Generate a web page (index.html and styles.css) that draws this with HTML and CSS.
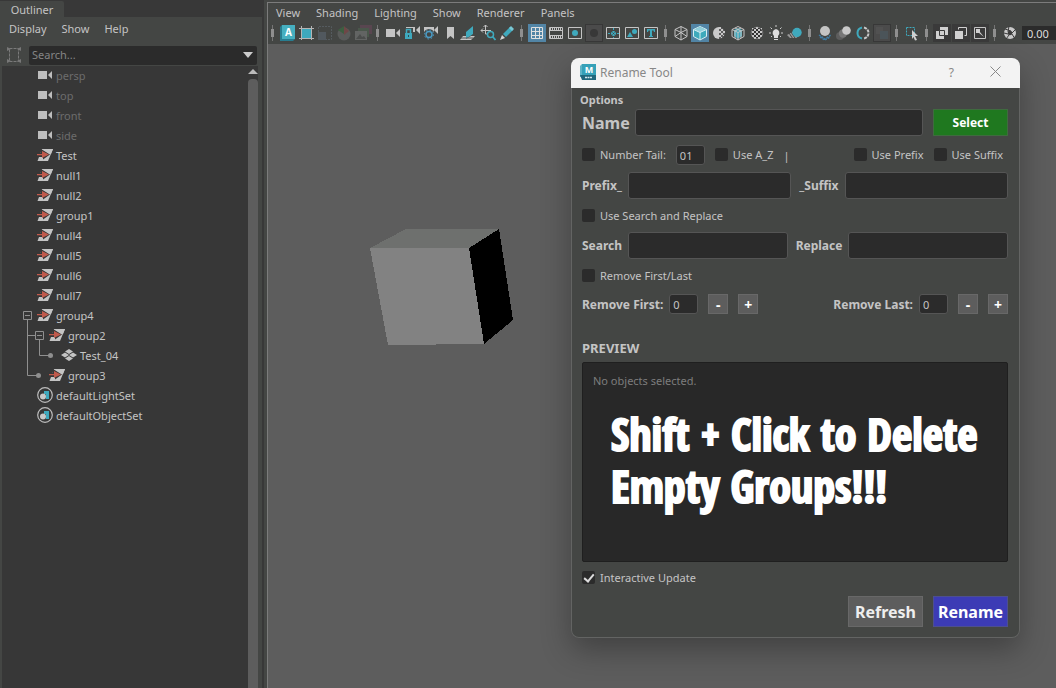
FILE: index.html
```html
<!DOCTYPE html>
<html lang="en">
<head>
    <meta charset="UTF-8">
    <meta name="viewport" content="width=device-width, initial-scale=1.0">
    <title>Rename Tool</title>
    <link rel="stylesheet" href="styles.css">
</head>
<body>

<!-- icons shared by several rows -->
<svg class="defs" aria-hidden="true">
    <symbol id="camera" viewBox="0 0 16 16">
        <path fill="#bdbdbd" d="M1 4h9v8H1zM11 8l4-4v8z"/>
    </symbol>
    <symbol id="group" viewBox="0 0 16 16">
        <path fill="#c4c4c4" d="M5 2h11l-5 12H.5z"/>
        <path fill="#373737" d="M0 5.500h4V2l9 5.500-7 5V10H0z"/>
        <path fill="#c05a4c" d="M0 7h5V4l7 3.500-7 3.500V8.200H0z"/>
        <path fill="#c4c4c4" d="M5.500 2H16l-2 5h-1.500L7 3z"/>
    </symbol>
    <symbol id="mesh" viewBox="0 0 16 16">
        <path fill="#c4c4c4" d="M8 2l4 2.500L8 7 4 4.500zM4 5.500L8 8l-4 2.500L0 8zM12 5.500L16 8l-4 2.500L8 8zM8 9l4 2.500L8 14l-4-2.500z"/>
    </symbol>
    <symbol id="set" viewBox="0 0 16 16">
        <circle cx="8" cy="8" r="7.300" fill="none" stroke="#bdbdbd" stroke-width="1.200"/>
        <path fill="#3fa9bd" d="M7 4h5v8H9V7H7z"/>
        <circle cx="6" cy="9.500" r="3" fill="#c8c8c8"/>
    </symbol>
</svg>

<div class="app">
    <aside class="outliner">
        <div class="tabs"><button type="button" class="tab">Outliner</button></div>
        <nav class="menu outliner-menu">
            <button type="button">Display</button>
            <button type="button">Show</button>
            <button type="button">Help</button>
        </nav>
        <div class="search">
            <svg class="frame-icon" viewBox="0 0 16 18" width="16" height="18" aria-hidden="true">
                <path fill="none" stroke="#7a7a7a" stroke-dasharray="3 1" d="M3.500 2.500h9v13h-9z"/>
                <path fill="#777" d="M1 1l4 2-4 2zM15 1l-4 2 4 2zM1 13l4 2-4 2zM15 13l-4 2 4 2z"/>
            </svg>
            <div class="search-box">
                <input type="text" placeholder="Search..." aria-label="Search">
                <svg viewBox="0 0 10 6" width="10" height="6" aria-hidden="true"><path fill="#ccc" d="M0 0h10L5 6z"/></svg>
            </div>
        </div>
        <div class="tree-wrap">
            <ul class="tree">
                <li class="hidden-node"><svg class="icon"><use href="#camera"/></svg>persp</li>
                <li class="hidden-node"><svg class="icon"><use href="#camera"/></svg>top</li>
                <li class="hidden-node"><svg class="icon"><use href="#camera"/></svg>front</li>
                <li class="hidden-node"><svg class="icon"><use href="#camera"/></svg>side</li>
                <li><svg class="icon"><use href="#group"/></svg>Test</li>
                <li><svg class="icon"><use href="#group"/></svg>null1</li>
                <li><svg class="icon"><use href="#group"/></svg>null2</li>
                <li><svg class="icon"><use href="#group"/></svg>group1</li>
                <li><svg class="icon"><use href="#group"/></svg>null4</li>
                <li><svg class="icon"><use href="#group"/></svg>null5</li>
                <li><svg class="icon"><use href="#group"/></svg>null6</li>
                <li><svg class="icon"><use href="#group"/></svg>null7</li>
                <li class="parent">
                    <button type="button" class="toggle" aria-label="Collapse group4"><svg width="14" height="20"><path d="M.5 5.500h8v8h-8zM2 9.500h5M4.500 14v6"/></svg></button>
                    <svg class="icon"><use href="#group"/></svg>group4
                </li>
                <li class="child">
                    <svg class="lines" width="33" height="20"><path d="M25.500 0v20M25.500 9.500h8"/></svg>
                    <button type="button" class="toggle" aria-label="Collapse group2"><svg width="14" height="20"><path d="M.5 5.500h8v8h-8zM2 9.500h5M4.500 14v6"/></svg></button>
                    <svg class="icon"><use href="#group"/></svg>group2
                </li>
                <li class="child">
                    <svg class="lines" width="59" height="20"><path d="M25.500 0v20M37.500 0v9.500h10"/><circle cx="48.500" cy="9.500" r="2.500"/></svg>
                    <svg class="icon"><use href="#mesh"/></svg>Test_04
                </li>
                <li class="child">
                    <svg class="lines" width="47" height="20"><path d="M25.500 0v9.500h10"/><circle cx="36.500" cy="9.500" r="2.500"/></svg>
                    <svg class="icon"><use href="#group"/></svg>group3
                </li>
                <li><svg class="icon"><use href="#set"/></svg>defaultLightSet</li>
                <li><svg class="icon"><use href="#set"/></svg>defaultObjectSet</li>
            </ul>
            <div class="scrollbar">
                <svg viewBox="0 0 10 5" width="10" height="5" aria-hidden="true"><path fill="#bbb" d="M0 5l5-5 5 5z"/></svg>
                <div class="thumb"></div>
            </div>
        </div>
    </aside>

    <main class="panel">
        <nav class="menu panel-menu">
            <button type="button">View</button>
            <button type="button">Shading</button>
            <button type="button">Lighting</button>
            <button type="button">Show</button>
            <button type="button">Renderer</button>
            <button type="button">Panels</button>
        </nav>
        <div class="toolbar">
            <span class="handle"></span>
            <button type="button" aria-label="Arnold"><svg viewBox="0 0 18 18"><path fill="#287d90" d="M2 3l2-2h13v14l-2 2H2z"/><path fill="#46afc0" d="M4 1h13v14H4z"/><text x="10.500" y="12" class="logo-text">A</text></svg></button>
            <button type="button" aria-label="Frame region"><svg viewBox="0 0 18 18"><path fill="none" stroke="#b5b5b5" d="M4.500 2v14M14.500 2v14M2 4.500h15M2 14.500h15"/><path fill="#3fa9bd" d="M5 5h9v9H5z"/></svg></button>
            <button type="button" aria-label="Snapshot" disabled><svg viewBox="0 0 18 18"><path fill="#51585e" d="M2 8h8v8H2z"/><path fill="none" stroke="#555b5f" stroke-dasharray="2 1" d="M2.500 8V2.500h13v13H10"/></svg></button>
            <button type="button" aria-label="Color" disabled><svg viewBox="0 0 18 18"><circle cx="9" cy="10" r="6.500" fill="#595b5a"/><path fill="#3d5e41" d="M3 6l6-4v8z"/><path fill="#6e4747" d="M9 2l5 5-5 4z"/></svg></button>
            <button type="button" aria-label="Image layers" disabled><svg viewBox="0 0 18 18"><path fill="#594650" d="M6 1h12v9H6z"/><path fill="#4a574b" d="M4 4h11v9H4z"/><path fill="#626463" d="M1 7h12v9H1z"/><path fill="#4b4d4c" d="M2 15l4-5 2 3 2-1 2 3z"/></svg></button>
            <span class="handle"></span>
            <button type="button" aria-label="Select camera"><svg viewBox="0 0 18 18"><path fill="#c4c4c4" d="M2 5h9v8H2zM12 9l4-4v8z"/></svg></button>
            <button type="button" aria-label="Lock camera"><svg viewBox="0 0 18 18"><path fill="#c4c4c4" d="M3 3h9v5H3zM13 6l4-4v8z"/><path fill="#444644" d="M1 4h9v12H1z"/><path fill="#3fa9bd" d="M2 9h7v6H2z"/><path fill="none" stroke="#3fa9bd" stroke-width="1.500" d="M3.500 9V5.500h4V9"/><path fill="#2b4a50" d="M5 11h1v2H5z"/></svg></button>
            <button type="button" aria-label="Camera attributes"><svg viewBox="0 0 18 18"><path fill="#c4c4c4" d="M2 3h10v5H2zM12 6l4-4v8z"/><circle cx="7" cy="10.500" r="5.500" fill="#444644"/><circle cx="7" cy="10.500" r="3" fill="none" stroke="#4b9bc4" stroke-width="1.500"/><circle cx="7" cy="10.500" r="4.500" fill="none" stroke="#4b9bc4" stroke-dasharray="1.500 2"/></svg></button>
            <button type="button" aria-label="Bookmarks"><svg viewBox="0 0 18 18"><path fill="#c4c4c4" d="M6 3h7v12l-3.500-3L6 15z"/></svg></button>
            <button type="button" aria-label="Image plane"><svg viewBox="0 0 18 18"><path fill="#3fa9bd" d="M6 8l7-6v8l-7 5z"/><path fill="#c4c4c4" d="M3 12h3v3l5-3h4l-4 4H0z"/><path stroke="#555" d="M1 14h12" /></svg></button>
            <button type="button" aria-label="Pan and zoom"><svg viewBox="0 0 18 18"><path fill="none" stroke="#c4c4c4" d="M6.500 1v9M2 6.500h10M4.500 3l2-2 2 2M4 4.500l-2 2 2 2M6.500 10h2"/><circle cx="11.500" cy="10.500" r="3" fill="#444644" stroke="#3fa9bd" stroke-width="1.500"/><path stroke="#3fa9bd" stroke-width="1.800" d="M13.500 12.500l3 3.500"/></svg></button>
            <button type="button" aria-label="Grease pencil"><svg viewBox="0 0 18 18"><path fill="#3fa9bd" d="M5 10l7-7 3 3-7 7z"/><path fill="#79c8d5" d="M11 4l2-2 3 3-2 2z"/><path fill="#d5d5d5" d="M4 11l3 3-5 2z"/></svg></button>
            <span class="handle"></span>
            <button type="button" class="on" aria-label="Grid"><svg viewBox="0 0 18 18"><path fill="none" stroke="#e0e0e0" d="M3.500 3.500h11v11h-11zM7.500 4v10M11.500 4v10M4 7.500h10M4 11.500h10"/></svg></button>
            <button type="button" aria-label="Film gate"><svg viewBox="0 0 18 18"><path fill="none" stroke="#c4c4c4" d="M2.500 3.500h13v11h-13zM3 6.500h12M3 11.500h12"/><path fill="none" stroke="#c4c4c4" stroke-dasharray="1 1" d="M3 5h12M3 13h12" stroke-width="2"/></svg></button>
            <button type="button" aria-label="Resolution gate"><svg viewBox="0 0 18 18"><path fill="none" stroke="#c4c4c4" d="M2.500 3.500h13v11h-13z"/><circle cx="9" cy="9" r="3" fill="#3fa9bd"/></svg></button>
            <button type="button" class="dim" aria-label="Gate mask"><svg viewBox="0 0 18 18"><circle cx="9" cy="9" r="4" fill="#383838"/></svg></button>
            <button type="button" aria-label="Field chart"><svg viewBox="0 0 18 18"><path fill="none" stroke="#c4c4c4" d="M2.500 3.500h13v11h-13z"/><path stroke="#3fa9bd" stroke-dasharray="2 1" d="M4 9.500h11M9.500 4v10"/><circle cx="9.500" cy="9.500" r="2" fill="none" stroke="#3fa9bd"/></svg></button>
            <button type="button" aria-label="Safe action"><svg viewBox="0 0 18 18"><path fill="none" stroke="#c4c4c4" d="M2.500 3.500h13v11h-13z"/><path fill="#3fa9bd" d="M4 13l3-5 3 5z"/><circle cx="11.500" cy="7.500" r="2.500" fill="#3fa9bd"/></svg></button>
            <button type="button" aria-label="Safe title"><svg viewBox="0 0 18 18"><path fill="none" stroke="#c4c4c4" d="M2.500 3.500h13v11h-13z"/><path fill="#3fa9bd" d="M5 5h8v3h-1l-.5-1.500H10V12h1v1H7v-1h1V6.500H6.500L6 8H5z"/></svg></button>
            <span class="handle"></span>
            <button type="button" aria-label="Wireframe"><svg viewBox="0 0 18 18"><path fill="none" stroke="#c4c4c4" d="M9 2.500l6 3v7l-6 3.500-6-3.500v-7zM3 5.500l6 3 6-3M9 8.500V16M9 2.500v6L3 12.500M9 8.500l6 4"/></svg></button>
            <button type="button" class="on" aria-label="Smooth shade"><svg viewBox="0 0 18 18"><path fill="#3eaabc" stroke="#d8eef2" d="M9 2.500l6.500 3v7L9 16l-6.500-3.500v-7z"/><path fill="#91cfdc" d="M9 3l6 2.500L9 8.500 3 5.500z"/><path fill="none" stroke="#d8eef2" d="M2.500 5.500l6.500 3 6.500-3M9 8.500V16"/></svg></button>
            <button type="button" aria-label="Default material"><svg viewBox="0 0 18 18"><path fill="#c9c9c9" d="M9 3v12A6 6 0 0 1 9 3z"/><path fill="#5c5c5c" d="M9 3v12a6 6 0 0 0 0-12z"/><path fill="#c9c9c9" d="M9 3h2v2H9zM11 5h2v2h-2zM9 7h2v2H9zM13 7h2v2h-2zM11 9h2v2h-2zM9 11h2v2H9zM13 11h1v1h-1zM11 13h1v1h-1z"/></svg></button>
            <button type="button" aria-label="Wireframe on shaded"><svg viewBox="0 0 18 18"><path fill="#3fa9bd" d="M9 4l4 2v6l-4 3-4-3V6z"/><path fill="none" stroke="#c4c4c4" d="M9 2.500l6 3v7L9 16l-6-3.500v-7zM3 5.500l6 3 6-3M9 8.500V16M6 4l6 3v7M12 4L6 7v7"/></svg></button>
            <button type="button" aria-label="Textured"><svg viewBox="0 0 18 18"><circle cx="9" cy="9" r="6" fill="#303030"/><path fill="#c9c9c9" d="M8 3h2v2H8zM6 5h2v2H6zM10 5h2v2h-2zM4 7h2v2H4zM8 7h2v2H8zM12 7h2v2h-2zM6 9h2v2H6zM10 9h2v2h-2zM4 11h2v2H4zM8 11h2v2H8zM12 11h2v2h-2zM6 13h2v2H6zM10 13h2v2h-2zM4 4h1v1H4zM13 4h1v1h-1z"/><circle cx="9" cy="9" r="5.800" fill="none" stroke="#aaa" stroke-width=".6"/></svg></button>
            <button type="button" aria-label="Use all lights"><svg viewBox="0 0 18 18"><path fill="#ddd" d="M9 5a4 4 0 0 0-2 7v2h4v-2a4 4 0 0 0-2-7z"/><path fill="#ddd" d="M7 15h4v1H7z"/><path stroke="#ccc" d="M9 1v2M3.500 3.500L5 5M14.500 3.500L13 5M2 9h2M14 9h2M4 13l1-1M14 13l-1-1"/></svg></button>
            <button type="button" aria-label="Shadows"><svg viewBox="0 0 18 18"><path fill="#999" d="M1 11l7-4 3 7H4z"/><path stroke="#444" d="M3 9l4 6M5 8l4 6"/><circle cx="11" cy="8.500" r="4.700" fill="#3fa9bd"/></svg></button>
            <span class="handle"></span>
            <button type="button" aria-label="Ambient occlusion"><svg viewBox="0 0 18 18"><path fill="none" stroke="#3f7ba3" stroke-width="1.500" stroke-dasharray="2 1" d="M3 11l6 4 6-4M4 13l5 3 5-3"/><circle cx="9" cy="7" r="5" fill="#c4c4c4"/></svg></button>
            <button type="button" aria-label="Motion blur"><svg viewBox="0 0 18 18"><circle cx="5" cy="12" r="4" fill="#5d5d5d"/><circle cx="8" cy="9.500" r="4.200" fill="#777"/><circle cx="11.500" cy="6.500" r="4.300" fill="#c9c9c9"/></svg></button>
            <button type="button" aria-label="Anti-aliasing"><svg viewBox="0 0 18 18"><path fill="none" stroke="#3fa9bd" stroke-width="2" d="M8 3.500C2 5 2 13 8 14.500"/><path fill="none" stroke="#c9c9c9" stroke-width="2" stroke-dasharray="3 1" d="M10 3.500c6 1.500 6 9.500 0 11"/></svg></button>
            <button type="button" class="dim" aria-label="Depth of field"><svg viewBox="0 0 18 18"><path fill="#515151" d="M3 3h7v7H3z"/><path fill="#4b5459" d="M7 7h8v8H7z"/></svg></button>
            <span class="handle"></span>
            <button type="button" aria-label="Isolate select"><svg viewBox="0 0 18 18"><path fill="none" stroke="#3fa9bd" stroke-dasharray="2 1" d="M3.500 3.500h8v8h-8z"/><path fill="#d0d0d0" d="M9 6l6 6h-3l2 4-2 .5-1.500-3.500L9 15z"/></svg></button>
            <span class="handle"></span>
            <button type="button" class="dark" aria-label="X-ray"><svg viewBox="0 0 18 18"><path fill="#d0d0d0" d="M7 3h8v8H7zM3 7h8v8H3z"/><path fill="#d0d0d0" stroke="#3a3a3a" d="M6.500 6.500h5v5h-5z"/></svg></button>
            <button type="button" class="dark" aria-label="X-ray active"><svg viewBox="0 0 18 18"><path fill="none" stroke="#d0d0d0" d="M6.500 5.500v-2h8v8h-2"/><path fill="#d0d0d0" d="M3 7h8v8H3z"/></svg></button>
            <button type="button" class="dark" aria-label="X-ray joints"><svg viewBox="0 0 18 18"><path fill="none" stroke="#c4c4c4" d="M3.500 3.500h11v11h-11z"/><path fill="#d0d0d0" d="M5 5h4v3l4 5-5-4H5z"/></svg></button>
            <span class="handle"></span>
            <button type="button" aria-label="Exposure"><svg viewBox="0 0 18 18"><circle cx="9" cy="9" r="6" fill="#c9c9c9"/><circle cx="9" cy="9" r="2.300" fill="#3c3c3c"/><path stroke="#3c3c3c" d="M7 8l1-6M10 7L4 5M11 9l4-4M11 10l3 5M8 11l-3 4M7 10l-4-1"/></svg></button>
            <input type="text" class="exposure" value="0.00" aria-label="Exposure value">
        </div>

        <div class="viewport">
            <svg class="cube" viewBox="0 0 144 117" width="144" height="117" role="img" aria-label="Cube" shape-rendering="crispEdges">
                <path fill="#6e706e" d="M0 19L36 0h93L99 19z"/>
                <path fill="#828282" d="M0 19h99l15 96-96 1z"/>
                <path fill="#000" d="M99 19l30-19 14 91-29 24z"/>
            </svg>
        </div>
    </main>
</div>

<section class="dialog" role="dialog" aria-label="Rename Tool">
    <header class="title-bar">
        <svg viewBox="0 0 16 16" width="16" height="16" aria-hidden="true">
            <path fill="#5fb3c6" d="M0 2l2-2v13H0z"/>
            <path fill="#36a1b8" d="M2 0h14v12H2z"/>
            <path fill="#21677c" d="M0 11h16v5H2z"/>
            <text x="9" y="9" class="logo-text small">M</text>
            <path stroke="#d5e8ed" stroke-width="1.500" stroke-dasharray="2 .5" d="M5 13.500h7"/>
        </svg>
        <span class="title">Rename Tool</span>
        <button type="button" class="help">?</button>
        <button type="button" aria-label="Close"><svg viewBox="0 0 11 11" width="11" height="11"><path stroke="#888" fill="none" d="M.5.5l10 10M10.500.5l-10 10"/></svg></button>
    </header>
    <form class="options">
        <h2 class="heading">Options</h2>
        <div class="row name-row">
            <label for="name" class="big-label">Name</label>
            <input type="text" id="name">
            <button type="button" class="btn select">Select</button>
        </div>
        <div class="row tail-row">
            <label class="check"><input type="checkbox">Number Tail:</label>
            <input type="text" class="num" value="01" aria-label="Start number">
            <label class="check"><input type="checkbox">Use A_Z</label>
            <span class="divider">|</span>
            <label class="check"><input type="checkbox">Use Prefix</label>
            <label class="check"><input type="checkbox">Use Suffix</label>
        </div>
        <div class="row pair">
            <label for="prefix">Prefix_</label>
            <input type="text" id="prefix">
            <label for="suffix">_Suffix</label>
            <input type="text" id="suffix">
        </div>
        <div class="row"><label class="check"><input type="checkbox">Use Search and Replace</label></div>
        <div class="row pair find-row">
            <label for="find">Search</label>
            <input type="text" id="find">
            <label for="replace">Replace</label>
            <input type="text" id="replace">
        </div>
        <div class="row"><label class="check"><input type="checkbox">Remove First/Last</label></div>
        <div class="row remove-row">
            <div class="stepper">
                <label for="first">Remove First:</label>
                <input type="text" id="first" class="num" value="0">
                <button type="button" class="btn step">-</button>
                <button type="button" class="btn step">+</button>
            </div>
            <div class="stepper">
                <label for="last">Remove Last:</label>
                <input type="text" id="last" class="num" value="0">
                <button type="button" class="btn step">-</button>
                <button type="button" class="btn step">+</button>
            </div>
        </div>
        <h2 class="preview-title">PREVIEW</h2>
        <div class="preview">
            <p class="empty">No objects selected.</p>
            <p class="caption">Shift + Click to Delete<br>Empty Groups!!!</p>
        </div>
        <div class="row update-row"><label class="check"><input type="checkbox" checked>Interactive Update</label></div>
        <div class="row actions">
            <button type="button" class="btn">Refresh</button>
            <button type="button" class="btn rename">Rename</button>
        </div>
    </form>
</section>

</body>
</html>
```
FILE: styles.css
```css
* {
    box-sizing: border-box;
}
body {
    margin: 0;
    font-family: "Noto Sans", "Open Sans", sans-serif;
    font-size: 11px;
    color: #c4c4c4;
    background-color: #444644;
    overflow: hidden;
}
button, input {
    font: inherit;
    color: inherit;
}
button {
    padding: 0;
    border: none;
    background: none;
    flex: none;
}
ul, p, h2 {
    margin: 0;
    padding: 0;
}
svg {
    flex: none;
}
.defs {
    position: absolute;
    width: 0;
    height: 0;
}
.logo-text {
    font: bold 10px "Open Sans", sans-serif;
    fill: #fff;
    text-anchor: middle;
}
.logo-text.small {
    font-size: 9px;
}
.app {
    display: flex;
    height: 100vh;
}

/* Outliner */
.outliner {
    display: flex;
    flex-direction: column;
    flex: none;
    width: 264px;
    border-right: 2px solid #383838;
}
.tabs {
    height: 17px;
    padding-top: 1px;
    background-color: #383838;
}
.tab {
    width: 64px;
    height: 17px;
    border-radius: 0 2px 0 0;
    background-color: #444644;
}
.menu {
    display: flex;
    align-items: center;
    padding-bottom: 2px;
}
.outliner-menu {
    height: 25px;
    padding-left: 9px;
    gap: 15px;
}
.search {
    display: flex;
    align-items: center;
    height: 24px;
    padding: 2px 5px 0 6px;
    gap: 7px;
}
.search-box {
    display: flex;
    align-items: center;
    flex: 1;
    height: 19px;
    padding: 0 4px 0 3px;
    border-radius: 2px;
    background-color: #2b2b2b;
}
.search-box input {
    flex: 1;
    min-width: 0;
    padding: 0 0 1px;
    border: none;
    outline: none;
    background: none;
}
.search-box input::placeholder {
    color: #858585;
}
.tree-wrap {
    display: flex;
    flex: 1;
    min-height: 0;
    margin: 0 4px 0 2px;
    background-color: #373737;
}
.tree {
    flex: 1;
    list-style: none;
}
.tree li {
    display: flex;
    align-items: center;
    height: 20px;
    padding: 0 0 2px 35px;
}
.tree .hidden-node {
    color: #6c6c6c;
}
.tree .parent {
    padding-left: 21px;
}
.tree .child {
    padding-left: 0;
}
.tree svg, .toggle {
    display: block;
}
.icon {
    width: 16px;
    height: 16px;
    margin-right: 3px;
}
.lines, .toggle {
    align-self: flex-start;
    fill: none;
    stroke: #8f8f8f;
}
.lines circle {
    fill: #8f8f8f;
    stroke: none;
}
.scrollbar {
    display: flex;
    flex-direction: column;
    width: 10px;
    padding-top: 3px;
    gap: 5px;
}
.thumb {
    flex: 1;
    border-radius: 4px 4px 0 0;
    background-color: #5d5d5d;
}

/* View panel */
.panel {
    display: flex;
    flex-direction: column;
    flex: 1;
    min-width: 0;
    margin: 2px 0 0 3px;
    border-top: 1px solid #7c7c7c;
    border-left: 1px solid #7c7c7c;
}
.panel-menu {
    height: 20px;
    padding-left: 8px;
    gap: 16px;
}
.toolbar {
    display: flex;
    align-items: center;
    flex: none;
    height: 21px;
    padding-bottom: 1px;
    overflow: hidden;
}
.toolbar button {
    width: 18px;
    height: 18px;
    margin-right: 1px;
}
.toolbar svg {
    display: block;
    width: 18px;
    height: 18px;
}
.toolbar .on {
    background-color: #5285a6;
}
.toolbar .dark {
    background-color: #3a3a3a;
}
.toolbar .dim {
    background-color: #4b4b4b;
    outline: 1px solid #383838;
    outline-offset: -1px;
}
.handle {
    flex: none;
    width: 11px;
    height: 16px;
    background:
        linear-gradient(#8f8f8f, #8f8f8f) 3px 50% / 3px 8px no-repeat,
        linear-gradient(#757575, #757575) 4px 0 / 1px 16px no-repeat;
}
.handle:first-child {
    width: 10px;
}
.exposure {
    flex: 1;
    min-width: 36px;
    height: 14px;
    margin-left: 2px;
    padding: 0 5px;
    border: none;
    background-color: #2b2b2b;
    color: #ddd;
}
.viewport {
    flex: 1;
    background-color: #5d5d5d;
}
.cube {
    display: block;
    margin: 185px 0 0 102px;
}

/* Rename window */
.dialog {
    position: absolute;
    top: 58px;
    left: 571px;
    width: 449px;
    overflow: hidden;
    border-radius: 8px;
    background-color: #444644;
    box-shadow: inset 0 0 0 1px #636463, 0 12px 30px rgba(0, 0, 0, 0.3);
}
.title-bar {
    display: flex;
    align-items: center;
    height: 30px;
    padding: 0 19px 2px 9px;
    background-color: #f3f3f3;
    color: #878787;
    font-size: 12px;
}
.title {
    flex: 1;
    margin-left: 4px;
}
.help {
    margin-right: 36px;
}
.options {
    padding: 2px 12px 11px 11px;
}
.heading {
    height: 19px;
    margin-left: -2px;
    font-size: 11px;
    line-height: 19px;
}
.row {
    display: flex;
    align-items: center;
    height: 20px;
    margin-top: 7px;
    font-size: 12px;
    font-weight: bold;
}
.name-row {
    height: 27px;
    margin-top: 0;
    gap: 5px;
}
.big-label {
    font-size: 16px;
}
.options input[type="text"] {
    flex: 1;
    min-width: 0;
    height: 27px;
    padding: 0 4px;
    border: 1px solid #555;
    border-radius: 3px;
    outline: none;
    background-color: #2b2b2b;
    font-size: 11px;
    font-weight: normal;
}
.options input.num {
    flex: none;
    width: 29px;
    height: 20px;
    padding: 0 3px;
}
.btn {
    width: 75px;
    height: 31px;
    border: 1px solid #686868;
    background-color: #5d5d5d;
    color: #eee;
    font-size: 16px;
    font-weight: bold;
}
.select {
    height: 27px;
    margin-left: 5px;
    border-color: #3f6b3f;
    background-color: #1f781f;
    color: #fff;
    font-size: 12px;
}
.rename {
    border-color: #4d4f8f;
    background-color: #3c3bb5;
    color: #fff;
}
.tail-row {
    margin-top: 9px;
    padding-right: 5px;
    gap: 10px;
}
.divider {
    flex: 1;
    font-size: 11px;
    font-weight: normal;
}
.check {
    display: flex;
    align-items: center;
    gap: 5px;
    padding-bottom: 2px;
    font-size: 11px;
    font-weight: normal;
}
.check input {
    appearance: none;
    width: 13px;
    height: 13px;
    margin: 0;
    border-radius: 2px;
    background-color: #2b2b2b;
}
.check input:checked::before {
    content: "";
    display: block;
    width: 4px;
    height: 8px;
    margin: 1px 0 0 4px;
    border: solid #ddd;
    border-width: 0 2px 2px 0;
    transform: rotate(40deg);
}
.pair {
    height: 27px;
    gap: 6px;
}
.pair input + label {
    margin-left: 2px;
}
.find-row {
    margin-top: 6px;
}
.remove-row {
    justify-content: space-between;
    margin-top: 8px;
}
.stepper {
    display: flex;
    align-items: center;
    gap: 10px;
}
.stepper .num {
    margin-left: -4px;
}
.step {
    width: 20px;
    height: 20px;
    padding-top: 2px;
    color: #fff;
    font-size: 14px;
    line-height: 16px;
}
.preview-title {
    height: 20px;
    margin-top: 24px;
    font-size: 13px;
    line-height: 20px;
}
.preview {
    height: 200px;
    margin-top: 4px;
    padding: 10px;
    border: 1px solid #1f1f1f;
    border-radius: 2px;
    background-color: #282828;
}
.empty {
    color: #7d7d7d;
    line-height: 16px;
}
.caption {
    margin: 19px 0 0 18px;
    font-family: Impact, "Open Sans Condensed", "Roboto Condensed", sans-serif;
    font-size: 44px;
    font-weight: 900;
    line-height: 52px;
    color: #fff;
    -webkit-text-stroke: 2px #fff;
    white-space: nowrap;
}
.update-row {
    margin-top: 6px;
}
.actions {
    justify-content: flex-end;
    height: 31px;
    margin-top: 8px;
    gap: 10px;
}
```
